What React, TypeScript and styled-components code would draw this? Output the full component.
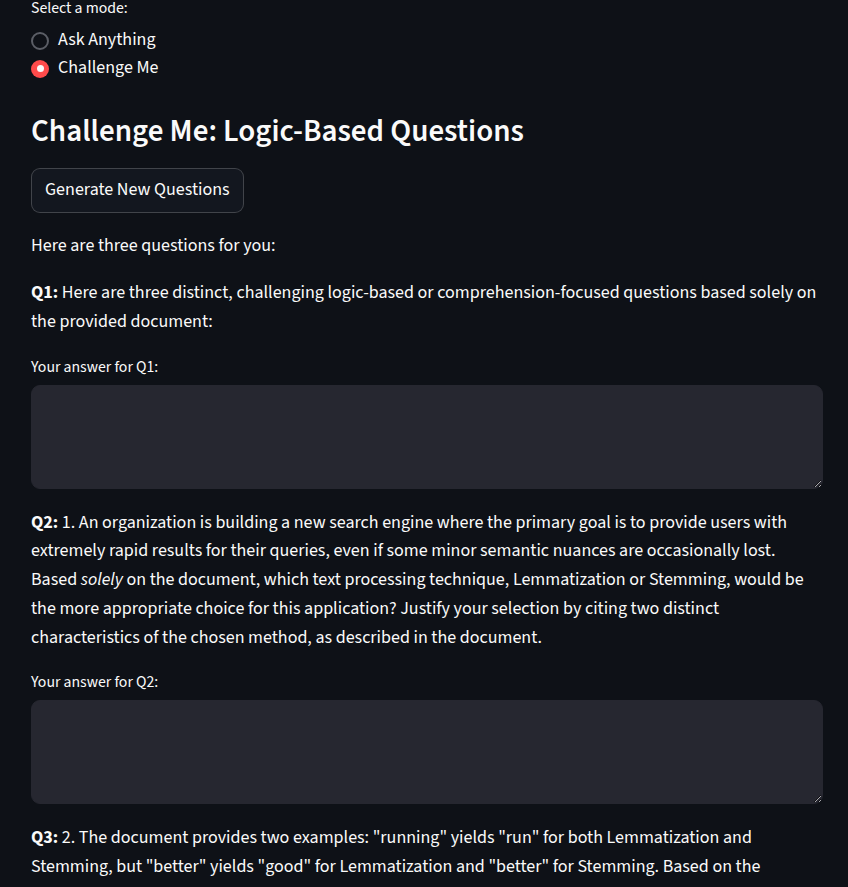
import React from "react";
import styled, { createGlobalStyle } from "styled-components";

const GlobalStyle = createGlobalStyle`
  html, body { margin: 0; padding: 0; background: #0e1117; }
  body {
    color: #fafafa;
    font-family: "Source Sans 3", "Liberation Sans", sans-serif;
    font-size: 18px;
    line-height: 1.6;
    -webkit-font-smoothing: antialiased;
  }
  * { box-sizing: border-box; }
`;

const Main = styled.main`
  width: 792px;
  margin-left: 31px;
  display: flex;
  flex-direction: column;
  gap: 19px;
  padding-bottom: 80px;
`;

const WidgetLabel = styled.div<{ $gap?: number }>`
  font-size: 15.75px;
  height: 27px;
  display: flex;
  align-items: center;
  margin-bottom: ${(p) => p.$gap ?? 4.5}px;
  color: #fafafa;
`;

const RadioGroup = styled.div`
  display: flex;
  flex-direction: column;
  margin-top: -5px;
`;

const RadioOption = styled.label`
  display: flex;
  align-items: center;
  height: 28px;
  gap: 9px;
  font-size: 18px;
  cursor: pointer;
`;

const RadioCircle = styled.span<{ $checked?: boolean }>`
  width: 18px;
  height: 18px;
  border-radius: 50%;
  flex: none;
  display: flex;
  align-items: center;
  justify-content: center;
  background: ${(p) => (p.$checked ? "#ff4b4b" : "#0e1117")};
  border: ${(p) => (p.$checked ? "none" : "2px solid #5b5e66")};
  &::after {
    content: "";
    display: ${(p) => (p.$checked ? "block" : "none")};
    width: 7px;
    height: 7px;
    border-radius: 50%;
    background: #fafafa;
  }
`;

const Heading = styled.h3`
  margin: 0 0 -1px 0;
  padding-top: 11px;
  font-size: 31px;
  font-weight: 600;
  line-height: 1.2;
  color: #fafafa;
`;

const Button = styled.button`
  align-self: flex-start;
  height: 45px;
  padding: 0 13px;
  background: #13171f;
  border: 1px solid rgba(250, 250, 250, 0.2);
  border-radius: 9px;
  color: #fafafa;
  font-family: inherit;
  font-size: 18px;
  line-height: 1.6;
  cursor: pointer;
`;

const Para = styled.p`
  margin: 0;
  font-size: 18px;
  line-height: 28.8px;
  strong { font-weight: 700; }
  em { font-style: italic; }
`;

const Field = styled.div`
  display: flex;
  flex-direction: column;
  margin-top: -2px;
  margin-bottom: 1px;
`;

const TextArea = styled.textarea`
  width: 100%;
  height: 104px;
  background: #262730;
  border: 1px solid #262730;
  border-radius: 9px;
  color: #fafafa;
  font-family: inherit;
  font-size: 18px;
  padding: 14px 16px;
  resize: vertical;
  color-scheme: dark;
  outline: none;
`;

const questions = [
  {
    id: "Q1",
    body: (
      <>Here are three distinct, challenging logic-based or comprehension-focused questions based solely on the provided document:</>
    ),
  },
  {
    id: "Q2",
    body: (
      <>
        1. An organization is building a new search engine where the primary goal is to provide users with extremely rapid results for their queries, even if some minor semantic nuances are occasionally lost. Based <em>solely</em> on the document, which text processing technique, Lemmatization or Stemming, would be the more appropriate choice for this application? Justify your selection by citing two distinct characteristics of the chosen method, as described in the document.
      </>
    ),
  },
  {
    id: "Q3",
    body: (
      <>
        2. The document provides two examples: "running" yields "run" for both Lemmatization and Stemming, but "better" yields "good" for Lemmatization and "better" for Stemming. Based on the document's description of how each technique works, explain why the two methods produce different outputs for "better" but the same output for "running".
      </>
    ),
  },
];

export default function App() {
  return (
    <>
      <GlobalStyle />
      <Main>
        <RadioGroup>
          <WidgetLabel>Select a mode:</WidgetLabel>
          <RadioOption>
            <RadioCircle />
            Ask Anything
          </RadioOption>
          <RadioOption>
            <RadioCircle $checked />
            Challenge Me
          </RadioOption>
        </RadioGroup>
        <Heading>Challenge Me: Logic-Based Questions</Heading>
        <Button>Generate New Questions</Button>
        <Para>Here are three questions for you:</Para>
        {questions.map((q) => (
          <React.Fragment key={q.id}>
            <Para>
              <strong>{q.id}:</strong> {q.body}
            </Para>
            {q.id !== "Q3" && (
              <Field>
                <WidgetLabel $gap={3.5}>Your answer for {q.id}:</WidgetLabel>
                <TextArea aria-label={`Your answer for ${q.id}`} />
              </Field>
            )}
          </React.Fragment>
        ))}
      </Main>
    </>
  );
}
